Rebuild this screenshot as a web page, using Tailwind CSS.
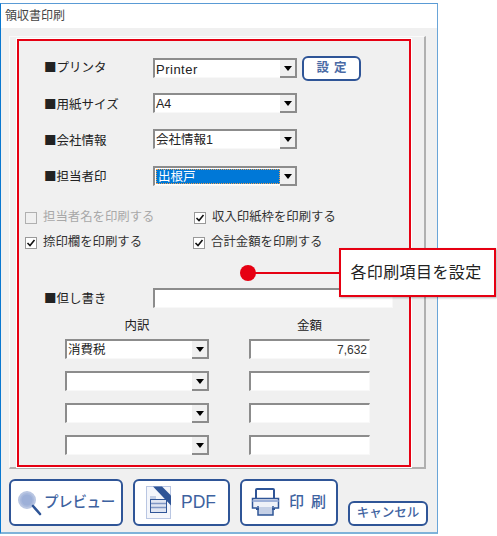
<!DOCTYPE html>
<html lang="ja">
<head>
  <meta charset="UTF-8">
  <title>領収書印刷</title>
  <script src="https://cdn.jsdelivr.net/npm/@tailwindcss/browser@4"></script>
</head>
<body class="bg-white text-[#222] font-['Liberation_Sans','Noto_Sans_CJK_JP',sans-serif] text-[12.4px] pt-[3px] overflow-hidden">
<div class="w-[438px] h-[531px] border-l border-l-[#0a78d0] border-t border-t-[#5a9bd5] border-r border-r-[#6aa5d8] border-b-2 border-b-[#7fb3d9] flex flex-col">
  <div class="h-[24px] bg-white pl-[4px] text-[12px] leading-[24px] text-[#444]">領収書印刷</div>
  <div class="flex-1 bg-[#f0f0f0]">
    <!-- group box -->
    <div class="ml-[8px] mt-[8px] w-[417px] h-[433px] border-t border-l border-t-[#fafafa] border-l-[#fafafa] border-r-2 border-b-2 border-r-[#b0b0b0] border-b-[#b0b0b0]">
      <div class="ml-[7px] mt-[2px] w-[394px] h-[428px] border-2 border-[#e60012] outline outline-white pt-[17px]">
        <div class="flex items-center h-[20px] pl-[25px]">
          <div class="w-[109px] text-[12.5px] -mt-[2px] font-['Noto_Sans_CJK_JP',sans-serif]">■プリンタ</div>
          <div class="flex w-[144px] h-[20px] border-t-2 border-l-2 border-[#8c8c8c] border-b border-b-[#f8f8f8] bg-white">
            <div class="flex-1 pl-[1px] text-[13px] leading-[19px] tracking-[0.5px]">Printer</div>
            <div class="w-[17px] h-[18px] bg-[#f0f0f0] border-r-2 border-b-2 border-[#8c8c8c] flex items-center justify-center"><span class="w-0 h-0 border-x-[4px] border-x-transparent border-t-[5px] border-t-black"></span></div>
          </div>
          <div class="ml-[5px] w-[59px] h-[25px] border-2 border-[#2f5597] rounded-[6px] bg-white text-[#4a6aa5] font-bold text-[12.5px] flex items-center justify-center gap-[5px]"><span>設</span><span>定</span></div>
        </div>
        <div class="flex items-center h-[20px] pl-[25px] mt-[15px]">
          <div class="w-[109px] text-[12.5px] mt-[2px] font-['Noto_Sans_CJK_JP',sans-serif]">■用紙サイズ</div>
          <div class="flex w-[144px] h-[20px] border-t-2 border-l-2 border-[#8c8c8c] border-b border-b-[#f8f8f8] bg-white">
            <div class="flex-1 pl-[1px] text-[12.5px] leading-[18px]">A4</div>
            <div class="w-[17px] h-[18px] bg-[#f0f0f0] border-r-2 border-b-2 border-[#8c8c8c] flex items-center justify-center"><span class="w-0 h-0 border-x-[4px] border-x-transparent border-t-[5px] border-t-black"></span></div>
          </div>
        </div>
        <div class="flex items-center h-[20px] pl-[25px] mt-[16px]">
          <div class="w-[109px] text-[12.5px] mt-[2px] font-['Noto_Sans_CJK_JP',sans-serif]">■会社情報</div>
          <div class="flex w-[144px] h-[20px] border-t-2 border-l-2 border-[#8c8c8c] border-b border-b-[#f8f8f8] bg-white">
            <div class="flex-1 pl-[1px] text-[12.5px] leading-[18px]">会社情報1</div>
            <div class="w-[17px] h-[18px] bg-[#f0f0f0] border-r-2 border-b-2 border-[#8c8c8c] flex items-center justify-center"><span class="w-0 h-0 border-x-[4px] border-x-transparent border-t-[5px] border-t-black"></span></div>
          </div>
        </div>
        <div class="flex items-center h-[20px] pl-[25px] mt-[17px]">
          <div class="w-[109px] text-[12.5px] mt-[1px] font-['Noto_Sans_CJK_JP',sans-serif]">■担当者印</div>
          <div class="flex w-[144px] h-[20px] border-t-2 border-l-2 border-[#8c8c8c] border-b border-b-[#f8f8f8] bg-white">
            <div class="flex-1 ml-[1px] my-[1px] pl-[1px] bg-[#0078d7] border border-dotted border-[#f0a050] text-white text-[12.5px] leading-[14px]">出根戸</div>
            <div class="w-[17px] h-[18px] bg-[#f0f0f0] border-r-2 border-b-2 border-[#8c8c8c] flex items-center justify-center"><span class="w-0 h-0 border-x-[4px] border-x-transparent border-t-[5px] border-t-black"></span></div>
          </div>
        </div>
        <!-- checkboxes -->
        <div class="grid grid-cols-[169px_1fr] gap-y-[12px] mt-[25px] pl-[6px]">
          <div class="flex items-center h-[13px] gap-[6px] text-[#a8a8a8]">
            <span class="w-[12px] h-[12px] border border-[#b0b0b0] bg-[#f0f0f0]"></span><span>担当者名を印刷する</span>
          </div>
          <div class="flex items-center h-[13px] gap-[6px]">
            <span class="w-[12px] h-[12px] border border-[#999] bg-white flex items-center justify-center"><svg width="10" height="10" viewBox="0 0 10 10" fill="none" stroke="#111" stroke-width="1.6"><path d="M1.5 5l2.5 2.5 4.5-5.5"/></svg></span><span class="text-[#333]">収入印紙枠を印刷する</span>
          </div>
          <div class="flex items-center h-[13px] gap-[6px]">
            <span class="w-[12px] h-[12px] border border-[#999] bg-white flex items-center justify-center"><svg width="10" height="10" viewBox="0 0 10 10" fill="none" stroke="#111" stroke-width="1.6"><path d="M1.5 5l2.5 2.5 4.5-5.5"/></svg></span><span class="text-[#333]">捺印欄を印刷する</span>
          </div>
          <div class="flex items-center h-[13px] gap-[6px] -ml-[1px]">
            <span class="w-[12px] h-[12px] border border-[#999] bg-white flex items-center justify-center"><svg width="10" height="10" viewBox="0 0 10 10" fill="none" stroke="#111" stroke-width="1.6"><path d="M1.5 5l2.5 2.5 4.5-5.5"/></svg></span><span class="text-[#333]">合計金額を印刷する</span>
          </div>
        </div>
        <div class="flex items-center h-[20px] pl-[25px] mt-[39px]">
          <div class="w-[109px] text-[12.5px] font-['Noto_Sans_CJK_JP',sans-serif]">■但し書き</div>
          <div class="w-[240px] h-[20px] border-t-2 border-l-2 border-[#8c8c8c] border-b border-r border-b-[#f8f8f8] border-r-[#f8f8f8] bg-white"></div>
        </div>
        <!-- breakdown -->
        <div class="flex pl-[46px] mt-[10px] text-[12.5px] leading-[16px]">
          <div class="w-[144px] text-center">内訳</div>
          <div class="ml-[40px] w-[121px] text-center">金額</div>
        </div>
        <div class="flex pl-[46px] mt-[5px]">
          <div class="flex w-[144px] h-[20px] border-t-2 border-l-2 border-[#8c8c8c] border-b border-b-[#f8f8f8] bg-white">
            <div class="flex-1 pl-[1px] text-[12.5px] leading-[18px]">消費税</div>
            <div class="w-[17px] h-[18px] bg-[#f0f0f0] border-r-2 border-b-2 border-[#8c8c8c] flex items-center justify-center"><span class="w-0 h-0 border-x-[4px] border-x-transparent border-t-[5px] border-t-black"></span></div>
          </div>
          <div class="ml-[40px] w-[121px] h-[20px] border-t-2 border-l-2 border-[#8c8c8c] border-b border-r border-b-[#f8f8f8] border-r-[#f8f8f8] bg-white text-right pr-[2px] text-[12px] leading-[18px] text-[#333]">7,632</div>
        </div>
        <div class="flex pl-[46px] mt-[12px]">
          <div class="flex w-[144px] h-[20px] border-t-2 border-l-2 border-[#8c8c8c] border-b border-b-[#f8f8f8] bg-white">
            <div class="flex-1"></div>
            <div class="w-[17px] h-[18px] bg-[#f0f0f0] border-r-2 border-b-2 border-[#8c8c8c] flex items-center justify-center"><span class="w-0 h-0 border-x-[4px] border-x-transparent border-t-[5px] border-t-black"></span></div>
          </div>
          <div class="ml-[40px] w-[121px] h-[20px] border-t-2 border-l-2 border-[#8c8c8c] border-b border-r border-b-[#f8f8f8] border-r-[#f8f8f8] bg-white"></div>
        </div>
        <div class="flex pl-[46px] mt-[12px]">
          <div class="flex w-[144px] h-[20px] border-t-2 border-l-2 border-[#8c8c8c] border-b border-b-[#f8f8f8] bg-white">
            <div class="flex-1"></div>
            <div class="w-[17px] h-[18px] bg-[#f0f0f0] border-r-2 border-b-2 border-[#8c8c8c] flex items-center justify-center"><span class="w-0 h-0 border-x-[4px] border-x-transparent border-t-[5px] border-t-black"></span></div>
          </div>
          <div class="ml-[40px] w-[121px] h-[20px] border-t-2 border-l-2 border-[#8c8c8c] border-b border-r border-b-[#f8f8f8] border-r-[#f8f8f8] bg-white"></div>
        </div>
        <div class="flex pl-[46px] mt-[12px]">
          <div class="flex w-[144px] h-[20px] border-t-2 border-l-2 border-[#8c8c8c] border-b border-b-[#f8f8f8] bg-white">
            <div class="flex-1"></div>
            <div class="w-[17px] h-[18px] bg-[#f0f0f0] border-r-2 border-b-2 border-[#8c8c8c] flex items-center justify-center"><span class="w-0 h-0 border-x-[4px] border-x-transparent border-t-[5px] border-t-black"></span></div>
          </div>
          <div class="ml-[40px] w-[121px] h-[20px] border-t-2 border-l-2 border-[#8c8c8c] border-b border-r border-b-[#f8f8f8] border-r-[#f8f8f8] bg-white"></div>
        </div>
      </div>
    </div>
    <!-- buttons -->
    <div class="flex items-end ml-[8px] mt-[10px] text-[#3d62a0]">
      <button class="w-[114px] h-[47px] border-2 border-[#2f5597] rounded-[6px] bg-white flex items-center pl-[6px] gap-[2px] font-medium text-[14.5px]">
        <svg width="25" height="26" viewBox="0 0 25 26"><circle cx="10" cy="10" r="8" fill="#a9b9dc" stroke="#b9c6e2" stroke-width="2"/><circle cx="10" cy="10" r="5.5" fill="#9db0d8"/><path d="M16 16l7 8" stroke="#2f5597" stroke-width="2.6" stroke-linecap="round"/></svg>
        <span class="-tracking-[0.3px]">プレビュー</span>
      </button>
      <button class="ml-[10px] w-[97px] h-[47px] border-2 border-[#2f5597] rounded-[6px] bg-white flex items-center pl-[11px] gap-[10px] text-[17.5px]">
        <svg width="25" height="33" viewBox="0 0 25 33"><rect x="0.5" y="0.5" width="24" height="32" fill="#f4f6fb" stroke="#b9c6e2"/><path d="M7 0.5h9l9 9v10z" fill="#2f5597"/><rect x="4" y="10" width="6" height="3" fill="#c5d0e6"/><rect x="4.5" y="13.5" width="16" height="13" fill="#dfe5f2" stroke="#2f5597"/><path d="M5 17.5h15M5 21.5h15" stroke="#7f96c4" stroke-width="1.5"/></svg>
        <span>PDF</span>
      </button>
      <button class="ml-[10px] w-[98px] h-[47px] border-2 border-[#2f5597] rounded-[6px] bg-white flex items-center pl-[9px] gap-[9px] font-medium text-[15px]">
        <svg width="29" height="29" viewBox="0 0 29 29" fill="none"><rect x="5" y="1" width="18" height="11" rx="1" fill="#fff" stroke="#2f5597" stroke-width="2"/><path d="M6 20H1.5V10.5h26V20H23" fill="#eef1f8" stroke="#2f5597" stroke-width="1.5"/><path d="M1.5 13h26" stroke="#9db0d8" stroke-width="2"/><rect x="7" y="19" width="15" height="8" fill="#c5d0e6"/><path d="M7 18v9h15v-9" stroke="#2f5597" stroke-width="1.5"/><path d="M5 21h3M21 21h3" stroke="#2f5597" stroke-width="2"/></svg>
        <span class="flex gap-[7px]"><span>印</span><span>刷</span></span>
      </button>
      <button class="ml-[10px] w-[80px] h-[25px] border-2 border-[#2f5597] rounded-[6px] bg-white flex items-center justify-center font-medium text-[12.5px]">キャンセル</button>
    </div>
  </div>
</div>
<!-- callout -->
<div class="absolute left-[248px] top-[273px] w-[92px] h-[2px] -mt-[1px] bg-[#e60012]"></div>
<div class="absolute left-[240px] top-[265px] w-[16px] h-[16px] rounded-full bg-[#e60012]"></div>
<div class="absolute left-[339px] top-[248px] w-[157px] h-[49px] border-2 border-[#e60012] bg-white shadow-[1px_1px_2px_rgba(0,0,0,0.3)] flex items-center justify-center pr-[3px] text-[16px] tracking-[0.4px] text-[#222]">各印刷項目を設定</div>
</body>
</html>
